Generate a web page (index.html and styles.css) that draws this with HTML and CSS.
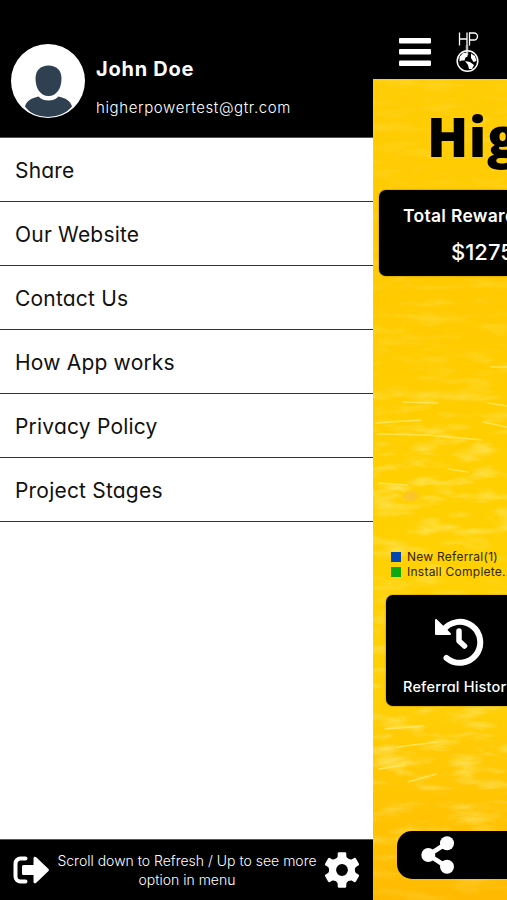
FILE: index.html
```html
<!DOCTYPE html>
<html lang="en">
  <head>
    <meta charset="utf-8">
    <meta name="viewport" content="width=device-width, initial-scale=1.0">
    <title>Higher Power</title>
    <link rel="stylesheet" href="styles.css">
  </head>
  <body>
    <aside class="drawer">
      <header class="profile">
        <svg class="avatar" viewBox="0 0 74 74">
          <defs>
            <clipPath id="face"><circle cx="37" cy="37" r="36" /></clipPath>
          </defs>
          <circle cx="37" cy="37" r="37" fill="#fff" />
          <g clip-path="url(#face)" fill="#2f4050">
            <path d="M37.500 21.500c8 0 13 5 13 13 0 10-5 17.500-13 17.500s-13-7.500-13-17.500c0-8 5-13 13-13z" />
            <path d="M27.500 52.500c3 3 6.500 4 10 4s7-1 10-4c7 1.500 12 4.500 13.500 10-6 7-14 11-24 11s-18-4-23-11c1.500-5.500 6.500-8.500 13.500-10z" />
          </g>
        </svg>
        <div class="who">
          <div class="name">John Doe</div>
          <div class="email">higherpowertest@gtr.com</div>
        </div>
      </header>
      <nav class="menu">
        <a class="item">Share</a>
        <a class="item">Our Website</a>
        <a class="item">Contact Us</a>
        <a class="item">How App works</a>
        <a class="item">Privacy Policy</a>
        <a class="item">Project Stages</a>
      </nav>
      <footer class="drawerFooter">
        <svg class="logout" viewBox="0 0 37 30">
          <path d="M12.500 3.500H7.500a5 5 0 0 0-5 5v13a5 5 0 0 0 5 5h5" fill="none" stroke="#fff" stroke-width="4" stroke-linecap="round" />
          <path d="M10.500 10h10V3.500c0-2 1.500-2.500 3-1l12 11.500q1 1 0 2L23.500 27.500c-1.500 1.500-3 1-3-1V20h-10q-1.500 0-1.500-1.500v-7q0-1.500 1.500-1.500z" fill="#fff" />
        </svg>
        <p class="hint">Scroll down to Refresh / Up to see more<br>option in menu</p>
        <svg class="gear" viewBox="-18 -18 36 36">
          <defs>
            <path id="tooth" d="M-6.500-10L-4.300-13.500V-16.500q0-1.300 1.300-1.300H3q1.300 0 1.300 1.300V-13.500L6.500-10z" />
          </defs>
          <g fill="#fff">
            <circle r="9.400" fill="none" stroke="#fff" stroke-width="7" />
            <use href="#tooth" />
            <use href="#tooth" transform="rotate(60)" />
            <use href="#tooth" transform="rotate(120)" />
            <use href="#tooth" transform="rotate(180)" />
            <use href="#tooth" transform="rotate(240)" />
            <use href="#tooth" transform="rotate(300)" />
          </g>
        </svg>
      </footer>
    </aside>

    <main class="page">
      <header class="topbar">
        <svg class="burger" viewBox="0 0 32 28" fill="#fff">
          <rect width="32" height="5.500" rx="1" />
          <rect y="11" width="32" height="5.500" rx="1" />
          <rect y="22.500" width="32" height="5.500" rx="1" />
        </svg>
        <svg class="logo" viewBox="0 0 24 42" fill="none" stroke="#fff">
          <path d="M3.500 1.500v13M11 1.500v20M3.500 8H11M13.500 14.500V2h4.500a3.500 3.500 0 0 1 0 7h-4.500" stroke-width="1.300" />
          <path d="M11 14v10" stroke-width="2.500" stroke="#bbb" />
          <circle cx="11.500" cy="30" r="10.300" stroke-width="1.500" />
          <path d="M3.500 26l4-4.500 4 1v3l-2 1-1 3-3 0-2 1zM9 30l5 1 4 3-2 4-3 0-1-4zM15 22.500l4 2.500 1.500 5-3 1-2.500-4z" fill="#fff" stroke="none" />
        </svg>
      </header>
      <section class="content">
        <svg class="paint" viewBox="0 0 134 821" preserveAspectRatio="none">
          <defs>
            <filter id="brush" x="0" y="0" width="100%" height="100%">
              <feTurbulence type="fractalNoise" baseFrequency="0.025 0.09" numOctaves="4" seed="8" />
              <feColorMatrix values="0 0 0 0 1  0 0 0 0 0.9  0 0 0 0 0.3  1.900 0 0 0 -0.900" />
            </filter>
            <linearGradient id="fade" x1="0" y1="0" x2="0" y2="1">
              <stop offset="0" stop-color="#fff" stop-opacity="0.250" />
              <stop offset="0.350" stop-color="#fff" stop-opacity="0.350" />
              <stop offset="0.480" stop-color="#fff" stop-opacity="0.800" />
              <stop offset="0.640" stop-color="#fff" stop-opacity="0.400" />
              <stop offset="0.820" stop-color="#fff" stop-opacity="0.800" />
              <stop offset="1" stop-color="#fff" stop-opacity="0.200" />
            </linearGradient>
            <mask id="strokes"><rect width="134" height="821" fill="url(#fade)" /></mask>
          </defs>
          <g mask="url(#strokes)"><rect width="134" height="821" filter="url(#brush)" /></g>
          <g fill="none" stroke="#ffec70" stroke-linecap="round" opacity="0.700">
            <path d="M4 355l50 1 55 5M30 323l35 1M115 324l19 3M110 343l24 5M118 288h16M3 344l45-3M6 404l28 2M75 390l20 3" stroke-width="1.500" />
            <path d="M12 650l38-3M24 668l40-5M35 703l28-8M6 690l26-4" stroke-width="1.500" />
          </g>
          <path d="M29 419c3-5 8-8 14-6 6 3 0 9-5 9s-6-2-9-3z" fill="#f8bd43" opacity="0.600" />
        </svg>
        <h1 class="title">Higher Power</h1>
        <div class="rewards">
          <div class="rewardsLabel">Total Rewards</div>
          <div class="amount">$1275</div>
        </div>
        <div class="legend">
          <div class="legendRow">
            <i class="swatch blue"></i><span>New Referral(1)</span><i class="swatch gray"></i>
          </div>
          <div class="legendRow">
            <i class="swatch green"></i><span>Install Complete..</span>
          </div>
        </div>
        <div class="history">
          <svg class="historyIcon" viewBox="0 0 50 50" fill="none" stroke="#fff" stroke-width="6" stroke-linecap="round">
            <path d="M9 13.500A20.500 20.500 0 1 1 12.500 41" />
            <path d="M25 14v10l5.500 5" stroke-width="5.500" stroke-linejoin="round" />
            <path d="M2 3v14h14z" fill="#fff" stroke-width="2" stroke-linejoin="round" />
          </svg>
          <div class="historyLabel">Referral History</div>
        </div>
        <div class="share">
          <svg class="shareIcon" viewBox="0 0 34 38" fill="#fff">
            <path d="M26 7L7.500 19 26 31" fill="none" stroke="#fff" stroke-width="4.500" />
            <circle cx="26" cy="7.300" r="7" />
            <circle cx="7.300" cy="19" r="7" />
            <circle cx="26" cy="30.700" r="7" />
          </svg>
        </div>
      </section>
    </main>
  </body>
</html>
```
FILE: styles.css
```css
:root {
  --yellow: #ffcd05;
  --blue: #0645ad;
  --green: #10a810;
}

* {
  box-sizing: border-box;
}
body {
  margin: 0;
  height: 900px;
  display: flex;
  overflow: hidden;
  background: #000;
  color: #fff;
  font-family: Inter, "Liberation Sans", sans-serif;
}
svg {
  display: block;
  flex: none;
}

/* drawer */
.drawer {
  width: 373px;
  flex: none;
  display: flex;
  flex-direction: column;
  background: #fff;
  font-feature-settings: "cv11";
}
.profile {
  height: 138px;
  padding: 44px 0 0 10.5px;
  display: flex;
  gap: 11.5px;
  background: #000;
  border-bottom: 1px solid #555;
}
.avatar {
  width: 74px;
  height: 74px;
}
.name {
  margin-top: 12px;
  font-size: 20px;
  line-height: 26px;
  font-weight: 700;
  letter-spacing: 0.75px;
}
.email {
  margin-top: 16px;
  font-size: 15px;
  line-height: 20px;
  font-weight: 300;
  letter-spacing: 0.62px;
}
.menu {
  flex: 1;
}
.item {
  display: flex;
  align-items: center;
  height: 64px;
  padding: 2px 0 0 15px;
  border-bottom: 1px solid #333;
  color: #111;
  font-size: 21px;
  letter-spacing: 0.2px;
}
.drawerFooter {
  height: 61px;
  padding: 0 13px 0 13px;
  display: flex;
  align-items: center;
  justify-content: space-between;
  background: #000;
  border-top: 1px solid #555;
}
.logout {
  width: 37px;
  height: 30px;
}
.hint {
  margin: 0 0 1px;
  text-align: center;
  white-space: nowrap;
  font-size: 14px;
  line-height: 19px;
  font-weight: 300;
}
.gear {
  width: 36px;
  height: 36px;
}

/* page behind the drawer */
.page {
  flex: 1;
  min-width: 0;
  display: flex;
  flex-direction: column;
  overflow: hidden;
  white-space: nowrap;
}
.topbar {
  height: 79px;
  padding: 31px 0 0 26px;
  display: flex;
  gap: 25px;
}
.burger {
  width: 32px;
  height: 28px;
  margin-top: 7px;
}
.logo {
  width: 24px;
  height: 42px;
}
.content {
  flex: 1;
  position: relative;
  z-index: 0;
  background: linear-gradient(var(--yellow), #ffca00 25%, #ffd000 50%, #ffd007 75%, #ffba00);
  overflow: hidden;
}
.paint {
  position: absolute;
  inset: 0;
  z-index: -1;
  width: 100%;
  height: 100%;
}
.title {
  margin: 19px 0 0 54px;
  color: #000;
  font: 800 54px/76px "Open Sans", "Noto Sans", sans-serif;
  letter-spacing: 0.5px;
}
.rewards {
  height: 86px;
  margin: 16px 0 0 6px;
  padding: 15px 0 0 24px;
  background: #000;
  border-radius: 7px 0 0 7px;
  box-shadow: 0 0 2px #997a00;
}
.rewardsLabel {
  font-size: 17.5px;
  line-height: 22px;
  font-weight: 600;
  letter-spacing: 0.3px;
}
.amount {
  margin: 11px 0 0 48px;
  font-size: 22px;
  line-height: 28px;
  font-weight: 500;
}
.legend {
  margin: 273px 0 0 18px;
  color: #302600;
  font-size: 12px;
  letter-spacing: 0.25px;
}
.legendRow {
  display: flex;
  align-items: center;
  gap: 6px;
  height: 15px;
}
.swatch {
  width: 10px;
  height: 10px;
  flex: none;
}
.blue {
  background: var(--blue);
}
.gray {
  margin-left: 3px;
  background: #b0aa70;
}
.green {
  background: var(--green);
}
.history {
  height: 111px;
  margin: 16px 0 0 13px;
  padding: 22px 0 0 17px;
  background: #000;
  border-radius: 7px 0 0 7px;
  box-shadow: 0 0 2px #997a00;
}
.historyIcon {
  width: 50px;
  height: 50px;
  margin-left: 31px;
}
.historyLabel {
  margin-top: 10px;
  font-size: 14.5px;
  line-height: 20px;
  font-weight: 500;
  letter-spacing: 0.2px;
  font-feature-settings: "cv11";
}
.share {
  height: 48px;
  margin: 125px 0 0 24px;
  padding: 5px 0 0 24px;
  background: #000;
  border-radius: 15px 0 0 15px;
}
.shareIcon {
  width: 34px;
  height: 38px;
}
```
